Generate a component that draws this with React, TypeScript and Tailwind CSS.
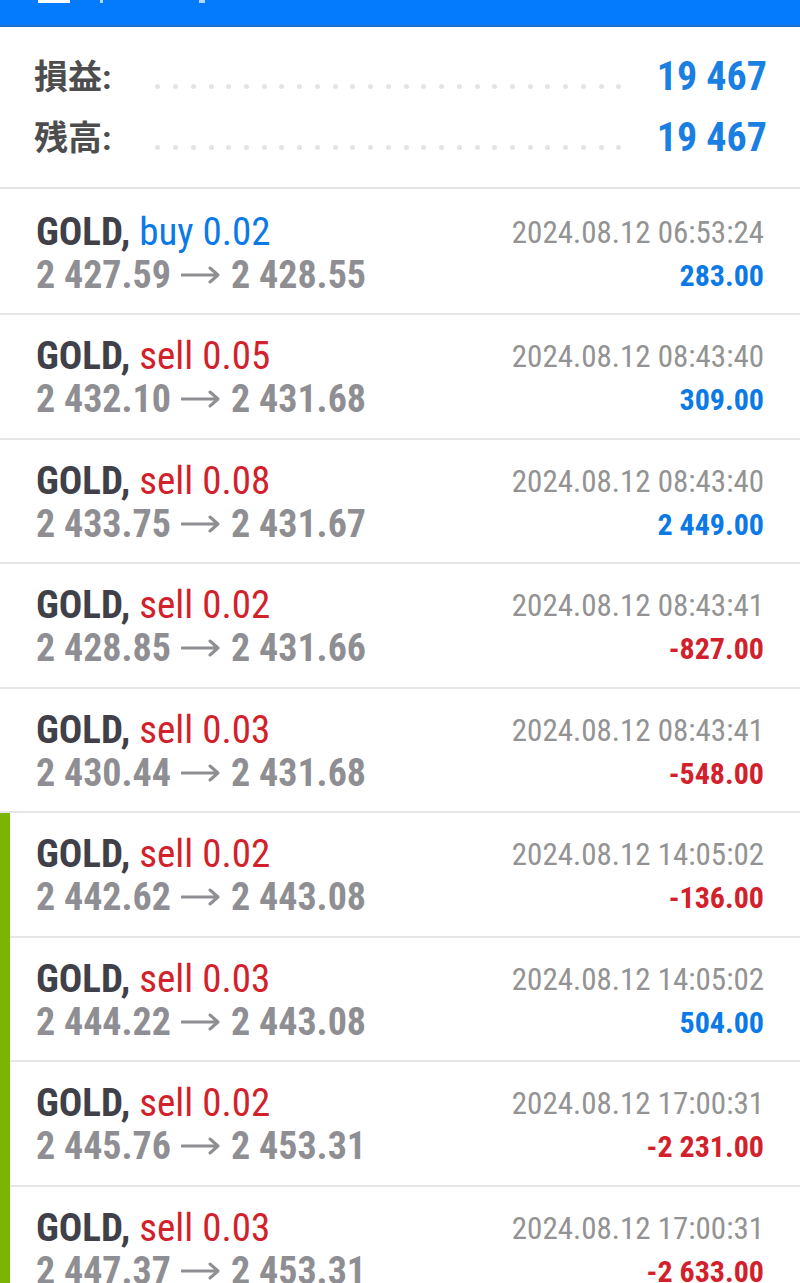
import React from 'react';

type Deal = {
  side: 'buy' | 'sell';
  lot: string;
  open: string;
  close: string;
  time: string;
  profit: string;
  mark?: boolean;
};

const deals: Deal[] = [
  { side: 'buy', lot: '0.02', open: '2 427.59', close: '2 428.55', time: '2024.08.12 06:53:24', profit: '283.00' },
  { side: 'sell', lot: '0.05', open: '2 432.10', close: '2 431.68', time: '2024.08.12 08:43:40', profit: '309.00' },
  { side: 'sell', lot: '0.08', open: '2 433.75', close: '2 431.67', time: '2024.08.12 08:43:40', profit: '2 449.00' },
  { side: 'sell', lot: '0.02', open: '2 428.85', close: '2 431.66', time: '2024.08.12 08:43:41', profit: '-827.00' },
  { side: 'sell', lot: '0.03', open: '2 430.44', close: '2 431.68', time: '2024.08.12 08:43:41', profit: '-548.00' },
  { side: 'sell', lot: '0.02', open: '2 442.62', close: '2 443.08', time: '2024.08.12 14:05:02', profit: '-136.00', mark: true },
  { side: 'sell', lot: '0.03', open: '2 444.22', close: '2 443.08', time: '2024.08.12 14:05:02', profit: '504.00', mark: true },
  { side: 'sell', lot: '0.02', open: '2 445.76', close: '2 453.31', time: '2024.08.12 17:00:31', profit: '-2 231.00', mark: true },
  { side: 'sell', lot: '0.03', open: '2 447.37', close: '2 453.31', time: '2024.08.12 17:00:31', profit: '-2 633.00', mark: true },
];

function Dots() {
  return (
    <div className="flex-1 flex justify-between pl-[44px] pr-[35px] self-end mb-[18px]">
      {Array.from({ length: 27 }).map((_, i) => (
        <span key={i} className="w-[5px] h-[5px] rounded-full bg-[#e4e4e4]" />
      ))}
    </div>
  );
}

function SummaryRow({ label, value }: { label: string; value: string }) {
  return (
    <div className="flex items-center h-[61px]">
      <span className="font-['Roboto_Condensed','Noto_Sans_CJK_JP',sans-serif] font-bold text-[34px] text-[#4d4d4d] leading-none">{label}</span>
      <Dots />
      <span className="font-bold text-[40px] text-[#1a7fe3] leading-none">{value}</span>
    </div>
  );
}

function Arrow() {
  return (
    <svg width="40" height="20" viewBox="0 0 40 20" className="inline-block mx-[10px] align-[3px]">
      <path d="M1 10H37M29 3l8 7-8 7" fill="none" stroke="#8e8e93" strokeWidth="3" strokeLinecap="round" strokeLinejoin="round" />
    </svg>
  );
}

function DealRow({ d }: { d: Deal }) {
  const loss = d.profit.startsWith('-');
  return (
    <div className="flex">
      <div className={d.mark ? 'w-[10px] bg-[#7cb500] shrink-0' : 'w-0'} />
      <div className={`flex-1 flex justify-between h-[124.5px] border-b-2 border-[#e6e6e6] pt-[20px] ${d.mark ? 'pl-[26px]' : 'pl-[36px]'} pr-[36px]`}>
        <div className="flex flex-col">
          <div className="text-[39px] leading-[43px]">
            <span className="font-bold text-[#404048]">GOLD,</span>{' '}
            <span className={d.side === 'buy' ? 'text-[#0b7ae6]' : 'text-[#d2212b]'}>
              {d.side} {d.lot}
            </span>
          </div>
          <div className="text-[38px] leading-[43px] font-bold text-[#8e8e93] whitespace-nowrap">
            {d.open}
            <Arrow />
            {d.close}
          </div>
        </div>
        <div className="flex flex-col items-end">
          <div className="text-[31px] leading-[43px] text-[#939393]">{d.time}</div>
          <div className={`text-[30px] leading-[43px] font-bold ${loss ? 'text-[#d2212b]' : 'text-[#0b7ae6]'}`}>{d.profit}</div>
        </div>
      </div>
    </div>
  );
}

export default function App() {
  return (
    <div className="w-[800px] h-[1283px] overflow-hidden bg-white font-['Roboto_Condensed','Roboto',sans-serif]">
      <div className="h-[27px] bg-[#037bfc] border-b-2 border-[#1f6fcc] flex items-start">
        <div className="ml-[38px] w-[32px] h-[3px] bg-white" />
        <div className="ml-[30px] w-[3px] h-[3px] bg-white/70" />
        <div className="ml-[96px] w-[6px] h-[3px] bg-white/70" />
      </div>
      <div className="h-[162px] px-[33px] pl-[34px] pt-[19px] border-b-2 border-[#e3e3e3]">
        <SummaryRow label="損益:" value="19 467" />
        <SummaryRow label="残高:" value="19 467" />
      </div>
      <div className="pt-[1.5px]">
        {deals.map((d, i) => (
          <DealRow key={i} d={d} />
        ))}
      </div>
    </div>
  );
}
